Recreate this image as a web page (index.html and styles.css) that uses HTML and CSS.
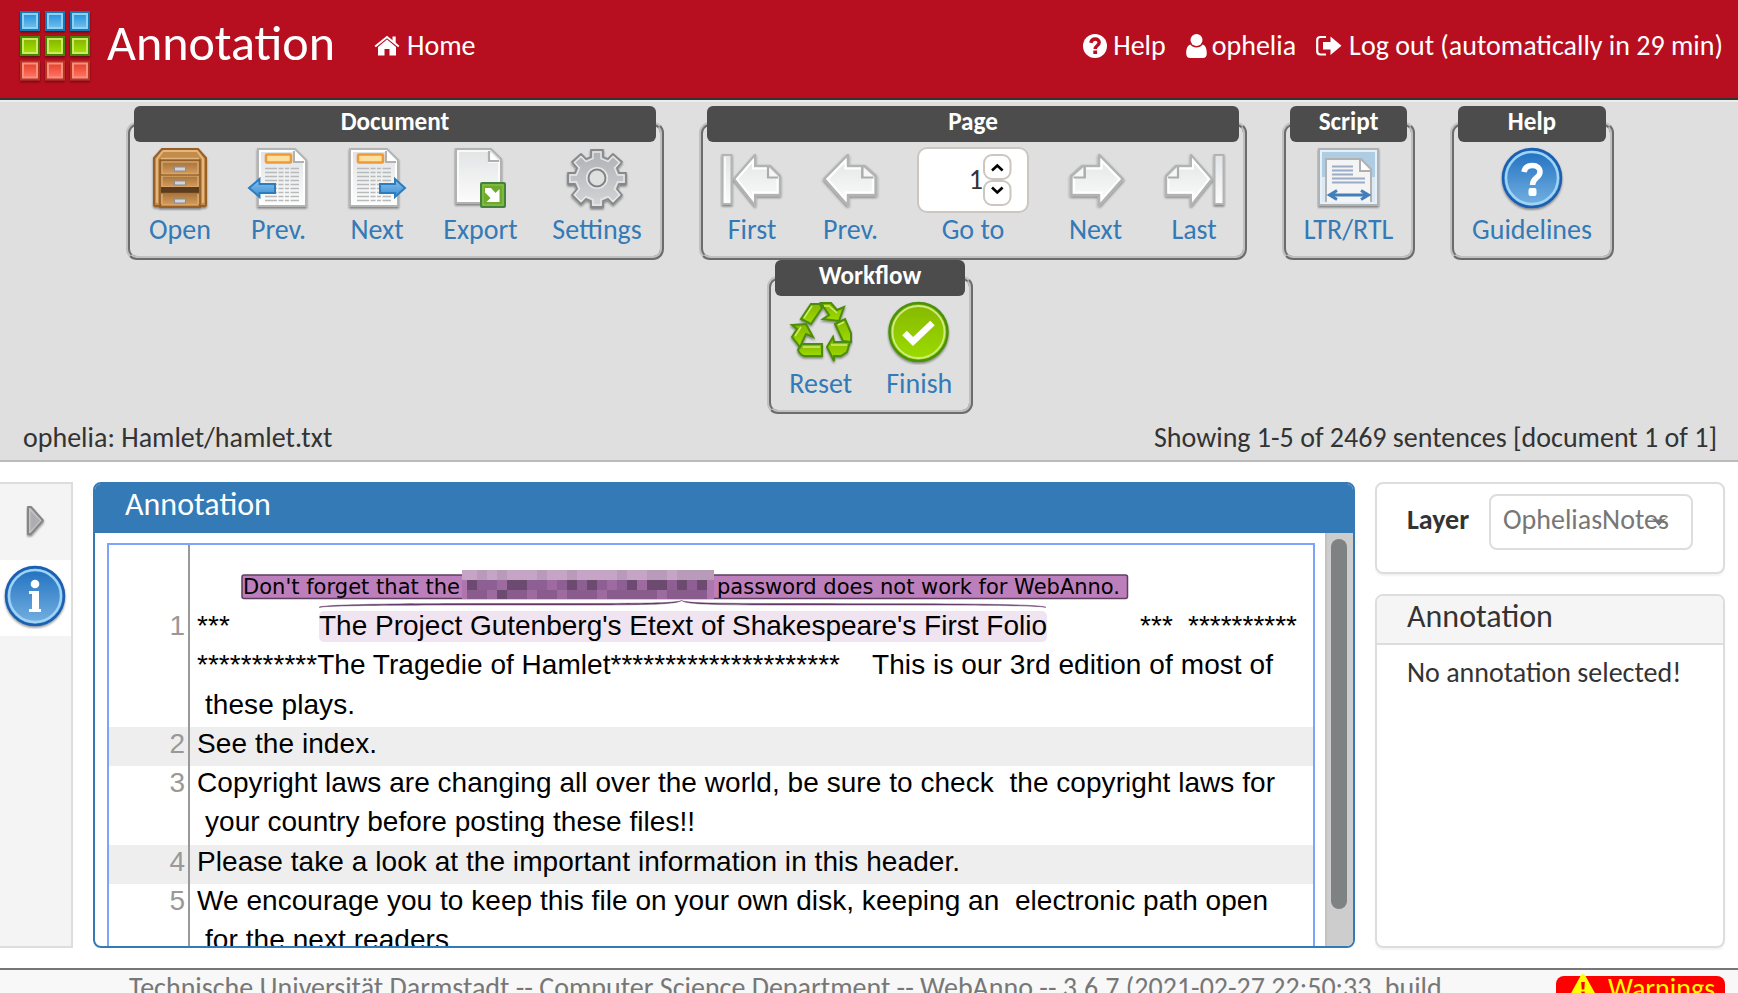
FILE: index.html
```html
<!DOCTYPE html>
<html lang="en">
<head>
<meta charset="utf-8">
<title>WebAnno - Annotation</title>
<link rel="stylesheet" href="styles.css">
</head>
<body>
<svg width="0" height="0" class="defs">
  <defs>
    <linearGradient id="gBlueSq" x2="0" y2="1"><stop offset="0" stop-color="#2a96dc"/><stop offset="1" stop-color="#6cbbea"/></linearGradient>
    <linearGradient id="gGreenSq" x2="0" y2="1"><stop offset="0" stop-color="#87b800"/><stop offset="1" stop-color="#a0de00"/></linearGradient>
    <linearGradient id="gRedSq" x2="0" y2="1"><stop offset="0" stop-color="#e8452e"/><stop offset="1" stop-color="#ff7060"/></linearGradient>
    <linearGradient id="gBlue" x2="0" y2="1"><stop offset="0" stop-color="#1f6fc0"/><stop offset="1" stop-color="#76b2e2"/></linearGradient>
    <linearGradient id="gArrow" x2="0" y2="1"><stop offset="0" stop-color="#8cc3ec"/><stop offset="1" stop-color="#3a8fd4"/></linearGradient>
    <linearGradient id="gPaper" x2="0" y2="1"><stop offset="0" stop-color="#e2e3e4"/><stop offset="1" stop-color="#fcfcfc"/></linearGradient>
    <linearGradient id="gGear" x2="0" y2="1"><stop offset="0" stop-color="#aeb0b4"/><stop offset="1" stop-color="#d4d5d7"/></linearGradient>
    <linearGradient id="gGreen" x2="0" y2="1"><stop offset="0" stop-color="#86b800"/><stop offset="1" stop-color="#9cdc00"/></linearGradient>
    <linearGradient id="gWood" x2="0" y2="1"><stop offset="0" stop-color="#a8743c"/><stop offset="1" stop-color="#d49c5c"/></linearGradient>
    <filter id="shade" x="-20%" y="-20%" width="140%" height="150%"><feDropShadow dx="0" dy="1.5" stdDeviation="1.2" flood-opacity=".45"/></filter>
    <g id="page"><path d="M7 2H44L55 13V59H7Z" fill="#fff" stroke="#b3b5b5" stroke-width="2"/><path d="M10 5H43V15H52V56H10Z" fill="url(#gPaper)"/><path d="M43 4V15H53" fill="#fff" stroke="#b0b2b2" stroke-width="2"/></g>
    <g id="news"><use href="#page"/><rect x="15" y="7.5" width="25" height="8" rx="1" fill="#fbe0a0" stroke="#ee9a38" stroke-width="2.6"/><path d="M14 21.500H48M14 25.500H48M14 29.500H48M14 33.500H48M14 37.500H48M14 41.500H48M14 45.500H48M14 49.500H48M14 53.500H48" stroke="#b8b9ba" stroke-width="1.6" stroke-dasharray="12 1.500 5 1.500 4 1.500"/></g>
    <g id="sheetArrow"><path d="M2 31L23 7V18H38L48 28V47H23V57Z" fill="url(#gPaper)" stroke="#b2b4b4" stroke-width="2.500" stroke-linejoin="round"/><path d="M5 31L21 12.500V20.500H36L45.500 30V44.500H21V51.500Z" fill="none" stroke="#fff" stroke-width="2"/><path d="M36 19V29.500H46" fill="#f6f6f6" stroke="#abadad" stroke-width="2.200"/></g>
  </defs>
</svg>

<header class="topbar">
  <svg class="logo" width="76" height="80" viewBox="17 6 76 80">
    <g filter="url(#shade)" stroke-width="2">
      <g fill="#8fd0f4" stroke="#1878b4"><rect x="21" y="12" width="18" height="18"/><rect x="46" y="12" width="18" height="18"/><rect x="71" y="12" width="18" height="18"/></g>
      <g fill="#cfe86a" stroke="#458800"><rect x="21" y="37" width="18" height="18"/><rect x="46" y="37" width="18" height="18"/><rect x="71" y="37" width="18" height="18"/></g>
      <g fill="#f89080" stroke="#b83424"><rect x="21" y="61.500" width="18" height="18"/><rect x="46" y="61.500" width="18" height="18"/><rect x="71" y="61.500" width="18" height="18"/></g>
    </g>
    <g fill="url(#gBlueSq)"><rect x="24" y="15" width="12" height="12"/><rect x="49" y="15" width="12" height="12"/><rect x="74" y="15" width="12" height="12"/></g>
    <g fill="url(#gGreenSq)"><rect x="24" y="40" width="12" height="12"/><rect x="49" y="40" width="12" height="12"/><rect x="74" y="40" width="12" height="12"/></g>
    <g fill="url(#gRedSq)"><rect x="24" y="64.500" width="12" height="12"/><rect x="49" y="64.500" width="12" height="12"/><rect x="74" y="64.500" width="12" height="12"/></g>
  </svg>
  <h1 class="app-title">Annotation</h1>
  <a class="nav home"><svg width="26" height="22" viewBox="0 0 26 22"><path d="M4 12L13 4.500L22 12V20.500H15.500V14H10.500V20.500H4Z" fill="#fff"/><path d="M1.200 11.500L13 2L24.800 11.500" fill="none" stroke="#fff" stroke-width="2"/><path d="M18.500 1.500H21.700V8.500L18.500 6Z" fill="#fff"/></svg>Home</a>
  <nav class="user-nav">
    <a class="nav help"><svg width="24" height="24" viewBox="0 0 24 24"><circle cx="12" cy="12" r="12" fill="#fff"/><path d="M7.800 8.800C8.500 6 10 5 12.200 5C14.500 5 16.200 6.500 16.200 8.500C16.200 11.500 12.200 11.500 12.200 15" fill="none" stroke="#b70f20" stroke-width="3.400"/><rect x="10.300" y="16.500" width="3.800" height="3.500" fill="#b70f20"/></svg>Help</a>
    <a class="nav user"><svg width="21" height="24" viewBox="0 0 21 24"><circle cx="10.500" cy="6" r="6" fill="#fff"/><path d="M4.500 10.500C6 12.800 8 13.500 10.500 13.500S15 12.800 16.500 10.500C20 11 20.800 16 20.800 19.500C20.800 22.500 19 24 17 24H4C2 24 .2 22.500 .2 19.500C.2 16 1 11 4.500 10.500Z" fill="#fff"/></svg>ophelia</a>
    <a class="nav"><svg width="26" height="22" viewBox="0 0 26 22"><path d="M10 2H4.500Q1.200 2 1.200 5V16Q1.200 19.500 4.500 19.500H10" fill="none" stroke="#fff" stroke-width="2.200"/><path d="M7 7H14.500V1.500L25.500 10.800L14.500 20V14.500H7Z" fill="#fff"/></svg>Log out (automatically in 29 min)</a>
  </nav>
</header>

<section class="toolbar">
  <div class="groups">
    <fieldset class="group g-document"><legend>Document</legend>
      <a class="tool"><svg width="64" height="64" viewBox="0 0 64 64"><g filter="url(#shade)"><path d="M14 2H50L58 11V58Q58 59 57 59H52V60H12V59H7Q6 59 6 58V11Z" fill="#c48c4c" stroke="#986028" stroke-width="2"/></g><path d="M15 4H49L55 12V56M15 4L9 12V56" fill="none" stroke="#e4b67c" stroke-width="2"/><path d="M12 13H52V58H12Z" fill="url(#gWood)" stroke="#8c5824" stroke-width="1.500"/><path d="M13 11.500H51" stroke="#e0b47c" stroke-width="1.500"/><g fill="url(#gWood)" stroke="#dfad70" stroke-width="1.200"><rect x="14" y="15" width="36" height="12"/><rect x="14" y="29" width="36" height="11"/><rect x="14" y="46" width="36" height="12"/></g><rect x="13" y="40" width="38" height="6" fill="#5c3c20"/><path d="M13 28H51M13 46H51" stroke="#80501f" stroke-width="1"/><g fill="#d0d5dc" stroke="#858c98" stroke-width="1"><rect x="26.500" y="20" width="11" height="4"/><rect x="26.500" y="34" width="11" height="4"/><rect x="26.500" y="52" width="11" height="4"/></g></svg>Open</a>
      <a class="tool"><svg width="64" height="64" viewBox="0 0 64 64"><use href="#news" x="4" filter="url(#shade)"/><path d="M2 41L12.500 32V37H28V46H12.500V50Z" fill="url(#gArrow)" stroke="#2c7cc0" stroke-width="2"/></svg>Prev.</a>
      <a class="tool"><svg width="64" height="64" viewBox="0 0 64 64"><use href="#news" x="-2" filter="url(#shade)"/><path d="M60 41L50 32V37H35V46H50V50Z" fill="url(#gArrow)" stroke="#2c7cc0" stroke-width="2"/></svg>Next</a>
      <a class="tool wide-export"><svg width="64" height="64" viewBox="0 0 64 64"><g filter="url(#shade)"><path d="M7 2H42L52 12V56H7Z" fill="url(#gPaper)" stroke="#b1b3b3" stroke-width="2"/><path d="M9 4H40V15H50V54H9Z" fill="none" stroke="#fff" stroke-width="1.500"/><path d="M40 4V14H50" fill="#fff" stroke="#aeb0b0" stroke-width="2.200"/></g><rect x="32" y="36" width="24" height="24" rx="1" fill="#6cab2c" stroke="#45833c" stroke-width="2"/><rect x="34" y="38" width="20" height="20" fill="none" stroke="#94c458"/><path d="M36 41H42L46.500 46L50.500 42V55H37.500L41.500 51L36 45.500Z" fill="#fff"/></svg>Export</a>
      <a class="tool wide-settings"><svg width="64" height="64" viewBox="0 0 64 64"><g filter="url(#shade)"><path d="M26 3H38V10L43 12L48 7L57 15L52 21L54 26H61V37H54L52 42L57 48L48 57L43 52L38 54V60H26V54L21 52L16 57L7 48L12 42L10 37H3V26H10L12 21L7 15L16 7L21 12L26 10Z" fill="url(#gGear)" stroke="#86888a" stroke-width="1.800" stroke-linejoin="round"/><path d="M28 5H36V11.500L43 14.500L48 9.500L54.500 15.500L49.500 21L52.500 28H59V35H52.500L49.500 42L54.500 48L48 54.500L43 49.500L36 52.500V58H28V52.500L21 49.500L16 54.500L9.500 48L14.500 42L11.500 35H5V28H11.500L14.500 21L9.500 15.500L16 9.500L21 14.500L28 11.500Z" fill="none" stroke="#e8e9eb" stroke-width="1.300"/></g><circle cx="32" cy="31" r="8.500" fill="#dfdfdf" stroke="#808284" stroke-width="2"/><circle cx="32" cy="31" r="10.400" fill="none" stroke="#e6e7e9" stroke-width="1.400"/></svg>Settings</a>
    </fieldset>
    <fieldset class="group g-page"><legend>Page</legend>
      <a class="tool"><svg width="64" height="64" viewBox="0 0 64 64"><g filter="url(#shade)"><rect x="2.500" y="8" width="9" height="49" fill="url(#gPaper)" stroke="#b2b4b4" stroke-width="2"/><path d="M5 10V55" stroke="#fff" stroke-width="1.500"/><g transform="translate(12 1)"><use href="#sheetArrow"/></g></g></svg>First</a>
      <a class="tool"><svg width="64" height="64" viewBox="0 0 64 64"><g filter="url(#shade)" transform="translate(3 1) scale(1.120 1)"><use href="#sheetArrow"/></g></svg>Prev.</a>
      <div class="tool goto"><span class="page-input"><span class="value">1</span><span class="spin"><svg width="29" height="52" viewBox="0 0 29 52"><rect x="1" y="1" width="26.500" height="24" rx="8" fill="#fff" stroke="#ccc6c1" stroke-width="2"/><rect x="1" y="27" width="26.500" height="24" rx="8" fill="#fff" stroke="#ccc6c1" stroke-width="2"/><path d="M9 16.500L14.300 11.500L19.600 16.500M9 33.500L14.300 38.500L19.600 33.500" fill="none" stroke="#000" stroke-width="2.600"/></svg></span></span><span class="link">Go to</span></div>
      <a class="tool"><svg width="64" height="64" viewBox="0 0 64 64"><g filter="url(#shade)" transform="translate(61 1) scale(-1.120 1)"><use href="#sheetArrow"/></g></svg>Next</a>
      <a class="tool"><svg width="64" height="64" viewBox="0 0 64 64"><g filter="url(#shade)"><rect x="52.500" y="8" width="9" height="49" fill="url(#gPaper)" stroke="#b2b4b4" stroke-width="2"/><g transform="translate(52 1) scale(-1 1)"><use href="#sheetArrow"/></g></g></svg>Last</a>
    </fieldset>
    <fieldset class="group g-script"><legend>Script</legend>
      <a class="tool"><svg width="64" height="64" viewBox="0 0 64 64"><g filter="url(#shade)"><rect x="2" y="2" width="59" height="56" fill="#e6f0f8" stroke="#b0b3b5" stroke-width="2"/><rect x="5" y="5" width="53" height="50" fill="#aecde2"/><path d="M5 30H58V55H5Z" fill="#dce8f2"/></g><path d="M9 55V12H44L54 22V55" fill="#f4f4f4" stroke="#b0b2b4" stroke-width="2"/><path d="M43 13V24H53" fill="#fff" stroke="#adafb0" stroke-width="2"/><path d="M15 19.500H36M15 23.500H36M15 27.500H36M15 31.500H48M15 35.500H48" stroke="#9aacc8" stroke-width="2"/><path d="M13 48H51M20 43.500L12.500 48L20 52.500M44 43.500L51.500 48L44 52.500" fill="none" stroke="#427fba" stroke-width="3"/></svg>LTR/RTL</a>
    </fieldset>
    <fieldset class="group g-help"><legend>Help</legend>
      <a class="tool"><svg width="64" height="64" viewBox="0 0 64 64"><circle cx="32" cy="31" r="29" fill="url(#gBlue)" stroke="#1c5fb0" stroke-width="2.500" filter="url(#shade)"/><circle cx="32" cy="31" r="26" fill="none" stroke="#9ed4f6" stroke-width="2.500"/><path d="M24 25C25 20 28 18.500 32.500 18.500C37 18.500 40 21 40 25C40 31 32.500 30.500 32.500 38" fill="none" stroke="#fff" stroke-width="5.500"/><rect x="28.500" y="41" width="8" height="8" rx="2" fill="#fff"/></svg>Guidelines</a>
    </fieldset>
  </div>
  <div class="groups second">
    <fieldset class="group g-workflow"><legend>Workflow</legend>
      <a class="tool"><svg width="64" height="64" viewBox="0 0 64 64"><g fill="url(#gGreen)" stroke="#4c8c08" stroke-width="2" filter="url(#shade)"><path d="M12 18L22 3H31L33 7L22 23Z"/><path d="M32 2H42L48 9L55 6L50 20L34 18L40 14Z"/><path d="M46 23L56 18L62 32V41L54 40Z"/><path d="M38 46L44 36L45 41H61L58 51L52 55H45V60Z"/><path d="M12 43H33V55H15Q11 54 9 49Z"/><path d="M3 24L17 23L24 36L17 33L11 46L3 36L8 28Z"/></g><g fill="none" stroke="#d0ec70" stroke-width="1.500"><path d="M15 17L23 5M35 5H40L48 12M49 24L55 21M42 44H58M14 46H31M6 35L12 26"/></g></svg>Reset</a>
      <a class="tool"><svg width="64" height="64" viewBox="0 0 64 64"><circle cx="31.500" cy="31" r="29" fill="url(#gGreen)" stroke="#4c900a" stroke-width="2.500" filter="url(#shade)"/><circle cx="31.500" cy="31" r="26" fill="none" stroke="#d2ea84" stroke-width="1.800"/><path d="M17.500 32L26 40.500L45.500 22" fill="none" stroke="#fff" stroke-width="6.500"/></svg>Finish</a>
    </fieldset>
  </div>
  <div class="doc-info"><span>ophelia: Hamlet/hamlet.txt</span><span class="count">Showing 1-5 of 2469 sentences [document 1 of 1]</span></div>
</section>

<main class="workspace">
  <aside class="leftbar">
    <div class="tab"><svg width="20" height="33" viewBox="0 0 20 33"><path d="M2 2L5 2L17 15.500L5 29H2Z" fill="#c4c4c4" stroke="#868686" stroke-width="2" stroke-linejoin="round" filter="url(#shade)"/><path d="M4.500 6V26L14 15.500Z" fill="#adadb2"/></svg></div>
    <div class="tab active"><svg width="64" height="64" viewBox="0 0 64 64"><circle cx="32" cy="31" r="29" fill="url(#gBlue)" stroke="#1c5fb0" stroke-width="2.500" filter="url(#shade)"/><circle cx="32" cy="31" r="26" fill="none" stroke="#9ed4f6" stroke-width="2.500"/><circle cx="32" cy="19" r="4.300" fill="#fff"/><path d="M26 26H36V44H38V47H26V44H29V29H26Z" fill="#fff"/></svg></div>
  </aside>
  <section class="main-panel">
    <h2 class="panel-head">Annotation</h2>
    <div class="panel-body">
      <div class="doc">
        <svg class="brat" viewBox="109 545 1204 403">
          <rect x="109" y="727" width="1204" height="39" fill="#eee"/><rect x="109" y="845" width="1204" height="39" fill="#eee"/>
          <rect x="188" y="545" width="2" height="403" fill="#999"/>
          <rect x="319" y="611" width="728" height="31" rx="5" fill="#f0e4f0"/>
          <path d="M319 607.500C321 603 480 603.500 562 603.500C650 603.500 676 603 681.500 600.500C687 603 710 603.500 800 603.500C900 604 1044 603 1046 607.500C1040 604.500 900 605 800 605C710 605 687 604.500 681.500 600.500C676 604.500 650 605 562 605C480 605 324 604.500 319 607.500Z" fill="#653c68" stroke="#653c68" stroke-width=".5"/>
          <rect x="242" y="575" width="885.500" height="23.500" rx="2" fill="#bc7fbc" stroke="#5e3f5e" stroke-width="1.500"/>
          <g class="note"><text x="243" y="593.500" textLength="217">Don't forget that the</text><text x="717" y="593.500" textLength="403">password does not work for WebAnno.</text></g>
          <g shape-rendering="crispEdges">
            <rect x="462" y="570" width="252" height="10" fill="#c5a4c6"/><rect x="462" y="580" width="252" height="10" fill="#8d5f92"/><rect x="462" y="590" width="252" height="9" fill="#8a5b8d"/>
            <path d="M477 570h10v10h-10zM497 570h10v10h-10zM537 570h10v10h-10zM567 570h10v10h-10zM617 570h10v10h-10zM647 570h20v10h-20zM677 570h37v10h-37z" fill="#b79bb8"/>
            <path d="M462 580h5v19h-5zM707 580h7v19h-7z" fill="#ae76ad"/>
            <path d="M467 580h10v10h-10zM507 580h20v10h-20zM567 580h10v10h-10zM587 580h10v10h-10zM627 580h10v10h-10zM647 580h20v10h-20zM677 580h10v10h-10zM697 580h10v10h-10zM497 590h10v9h-10z" fill="#6d4a70"/>
            <path d="M497 580h10v10h-10zM547 580h10v10h-10zM607 580h10v10h-10zM637 580h10v10h-10zM487 590h10v9h-10zM527 590h10v9h-10zM557 590h10v9h-10zM597 590h10v9h-10zM657 590h10v9h-10z" fill="#9d6b9f"/>
          </g>
          <g class="num"><text x="185" y="634.500">1</text><text x="185" y="752.500">2</text><text x="185" y="791.500">3</text><text x="185" y="870.500">4</text><text x="185" y="909.500">5</text></g>
          <g class="sentence">
            <text x="197" y="634.500" textLength="33">***</text><text x="319" y="634.500" textLength="728">The Project Gutenberg's Etext of Shakespeare's First Folio</text><text x="1140" y="634.500" textLength="33">***</text><text x="1188" y="634.500" textLength="109">**********</text>
            <text x="197" y="673.500" textLength="643">***********The Tragedie of Hamlet*********************</text><text x="872" y="673.500" textLength="401">This is our 3rd edition of most of</text>
            <text x="205" y="713.500" textLength="150">these plays.</text>
            <text x="197" y="752.500" textLength="180">See the index.</text>
            <text x="197" y="791.500" textLength="1078">Copyright laws are changing all over the world, be sure to check  the copyright laws for</text>
            <text x="205" y="830.500" textLength="490">your country before posting these files!!</text>
            <text x="197" y="870.500" textLength="763">Please take a look at the important information in this header.</text>
            <text x="197" y="909.500" textLength="1071">We encourage you to keep this file on your own disk, keeping an  electronic path open</text>
            <text x="205" y="948.500" textLength="244">for the next readers</text>
          </g>
        </svg>
      </div>
      <div class="track"><div class="thumb"></div></div>
    </div>
  </section>
  <aside class="rightbar">
    <section class="card layer-card"><label class="layer">Layer</label><span class="select">OpheliasNotes<svg class="caret" width="16" height="8" viewBox="0 0 16 8"><path d="M0 0Q8 3 16 0Q12 3 8 8Q4 3 0 0Z" fill="#777"/></svg></span></section>
    <section class="card detail"><h2 class="card-head">Annotation</h2><p class="empty">No annotation selected!</p></section>
  </aside>
</main>

<footer class="footer">
  <span class="version">Technische Universität Darmstadt -- Computer Science Department -- WebAnno -- 3.6.7 (2021-02-27 22:50:33, build</span>
  <span class="warnings"><svg width="28" height="26" viewBox="0 0 28 26"><path d="M14 1Q15.500 1 16.500 3L27 22Q28 25 25 25H3Q0 25 1 22L11.500 3Q12.500 1 14 1Z" fill="#ff0"/><path d="M12.200 9H15.800L15.300 16.500H12.700ZM12.300 18.500H15.700V22H12.300Z" fill="#f00"/></svg>Warnings</span>
</footer>
</body>
</html>
```
FILE: styles.css
```css
* { box-sizing: border-box; }
body { margin: 0; width: 1738px; height: 993px; overflow: hidden; display: flex; flex-direction: column; background: #fff; color: #333; font-family: Carlito, Lato, sans-serif; font-size: 28px; line-height: 40px; }
h1, h2, p { margin: 0; font-weight: 400; }
.defs { position: absolute; }

.topbar { height: 100px; flex: none; display: flex; align-items: flex-start; background: #b70f20; border-bottom: 2px solid #333; color: #fff; padding: 0 15px 0 17px; }
.logo { margin-top: 6px; }
.app-title { font-size: 50px; line-height: 60px; margin: 13px 0 0 14px; width: 226px; white-space: nowrap; }
.nav { display: flex; align-items: center; gap: 7px; white-space: nowrap; }
.nav.help { gap: 6px; }
.nav.user { gap: 5px; }
.home { margin: 26px 0 0 41px; }
.user-nav { display: flex; gap: 20px; margin: 26px 0 0 auto; }

.toolbar { height: 362px; flex: none; background: #dfdfdf; border-top: 2px solid #ececec; border-bottom: 2px solid #bbb; padding-top: 4px; display: flex; flex-direction: column; }
.groups { display: flex; height: 154px; justify-content: center; gap: 35px; padding-left: 2px; }
.group { margin: 0; height: 154px; min-width: 0; border: 4px ridge #c0c0c0; border-radius: 11px; padding: 0; display: flex; gap: 34.5px; justify-content: center; }
.group legend { height: 36px; line-height: 32px; width: calc(100% - 8px); margin: 0; padding: 0; text-align: center; border-radius: 6px; background: #4c4c4c; color: #fff; font-size: 25.2px; font-weight: 700; }
.g-document { width: 538px; }
.g-page { width: 548px; }
.g-script { width: 133px; }
.g-help { width: 164px; }
.g-workflow { width: 206px; }
.tool { width: 64px; display: flex; flex-direction: column; align-items: center; color: #337ab7; white-space: nowrap; padding-top: 5px; }
.tool > svg { flex: none; margin-bottom: -1px; }
.tool, .link { line-height: 40px; }
.wide-export { width: 74px; }
.wide-settings { width: 90px; }
.goto { width: 112px; }
.page-input { display: flex; align-items: center; justify-content: flex-end; flex: none; width: 112px; height: 66px; margin-bottom: -3px; border: 2px solid #ccc6c1; border-radius: 10px; background: #fff; color: #333; padding-right: 15px; }
.spin { display: flex; }
.doc-info { display: flex; justify-content: space-between; padding: 4px 21px 0 23px; }

.workspace { height: 506px; flex: none; display: flex; padding: 20px 13px 20px 0; }
.leftbar { width: 73px; background: #f4f4f4; border: 2px solid #ddd; border-left: 0; }
.tab { height: 76px; display: flex; justify-content: center; align-items: center; padding-bottom: 2px; }
.tab.active { background: #fff; padding-right: 2px; }
.main-panel { width: 1262px; margin-left: 20px; border: 2px solid #337ab7; border-radius: 8px; overflow: hidden; }
.panel-head { height: 49px; padding-left: 30px; line-height: 41px; background: #337ab7; color: #fff; font-size: 32px; }
.panel-body { display: flex; height: 413px; }
.doc { flex: 1; overflow: hidden; padding: 10px 0 0 12px; }
.brat { display: block; box-sizing: content-box; width: 1204px; height: 403px; border: 2px solid #7fa2ff; border-bottom: 0; }
.brat text { white-space: pre; }
.sentence, .num { font: 28px "Liberation Sans", sans-serif; fill: #000; }
.num { fill: #999; text-anchor: end; }
.note { font: 21px "DejaVu Sans", sans-serif; }
.track { width: 28px; background: #cdcdcd; border-left: 2px solid #c5c3c0; padding: 6px 0 0 4px; }
.thumb { width: 16px; height: 370px; border-radius: 8px; background: #7e8282; }
.rightbar { width: 350px; margin-left: 20px; display: flex; flex-direction: column; gap: 20px; }
.card { border: 2px solid #ddd; border-radius: 8px; box-shadow: 0 2px 2px rgba(0, 0, 0, .05); }
.layer-card { height: 92px; display: flex; padding: 10px 0 0 30px; }
.layer { width: 82px; font-weight: 700; line-height: 52px; }
.select { position: relative; width: 204px; height: 56px; border: 2px solid #ddd; border-radius: 8px; padding-left: 12px; line-height: 47px; color: #777; }
.caret { position: absolute; right: 24px; top: 22px; }
.detail { flex: 1; overflow: hidden; }
.card-head { height: 49px; padding-left: 30px; line-height: 41px; font-size: 32px; background: #f5f5f5; border-bottom: 2px solid #ddd; }
.empty { padding: 8px 0 0 30px; }

.footer { flex: 1; display: flex; align-items: flex-start; background: #f8f8f8; border-top: 2px solid #777; color: #777; padding: 0 13px 0 129px; white-space: nowrap; }
.version { line-height: 36px; }
.warnings { display: flex; align-items: flex-start; gap: 11px; margin: 6px 0 0 auto; width: 169px; height: 34px; padding-left: 13px; border-radius: 8px; background: #f00; color: #ff0; line-height: 25px; }
.warnings svg { margin-top: -3px; }
```
